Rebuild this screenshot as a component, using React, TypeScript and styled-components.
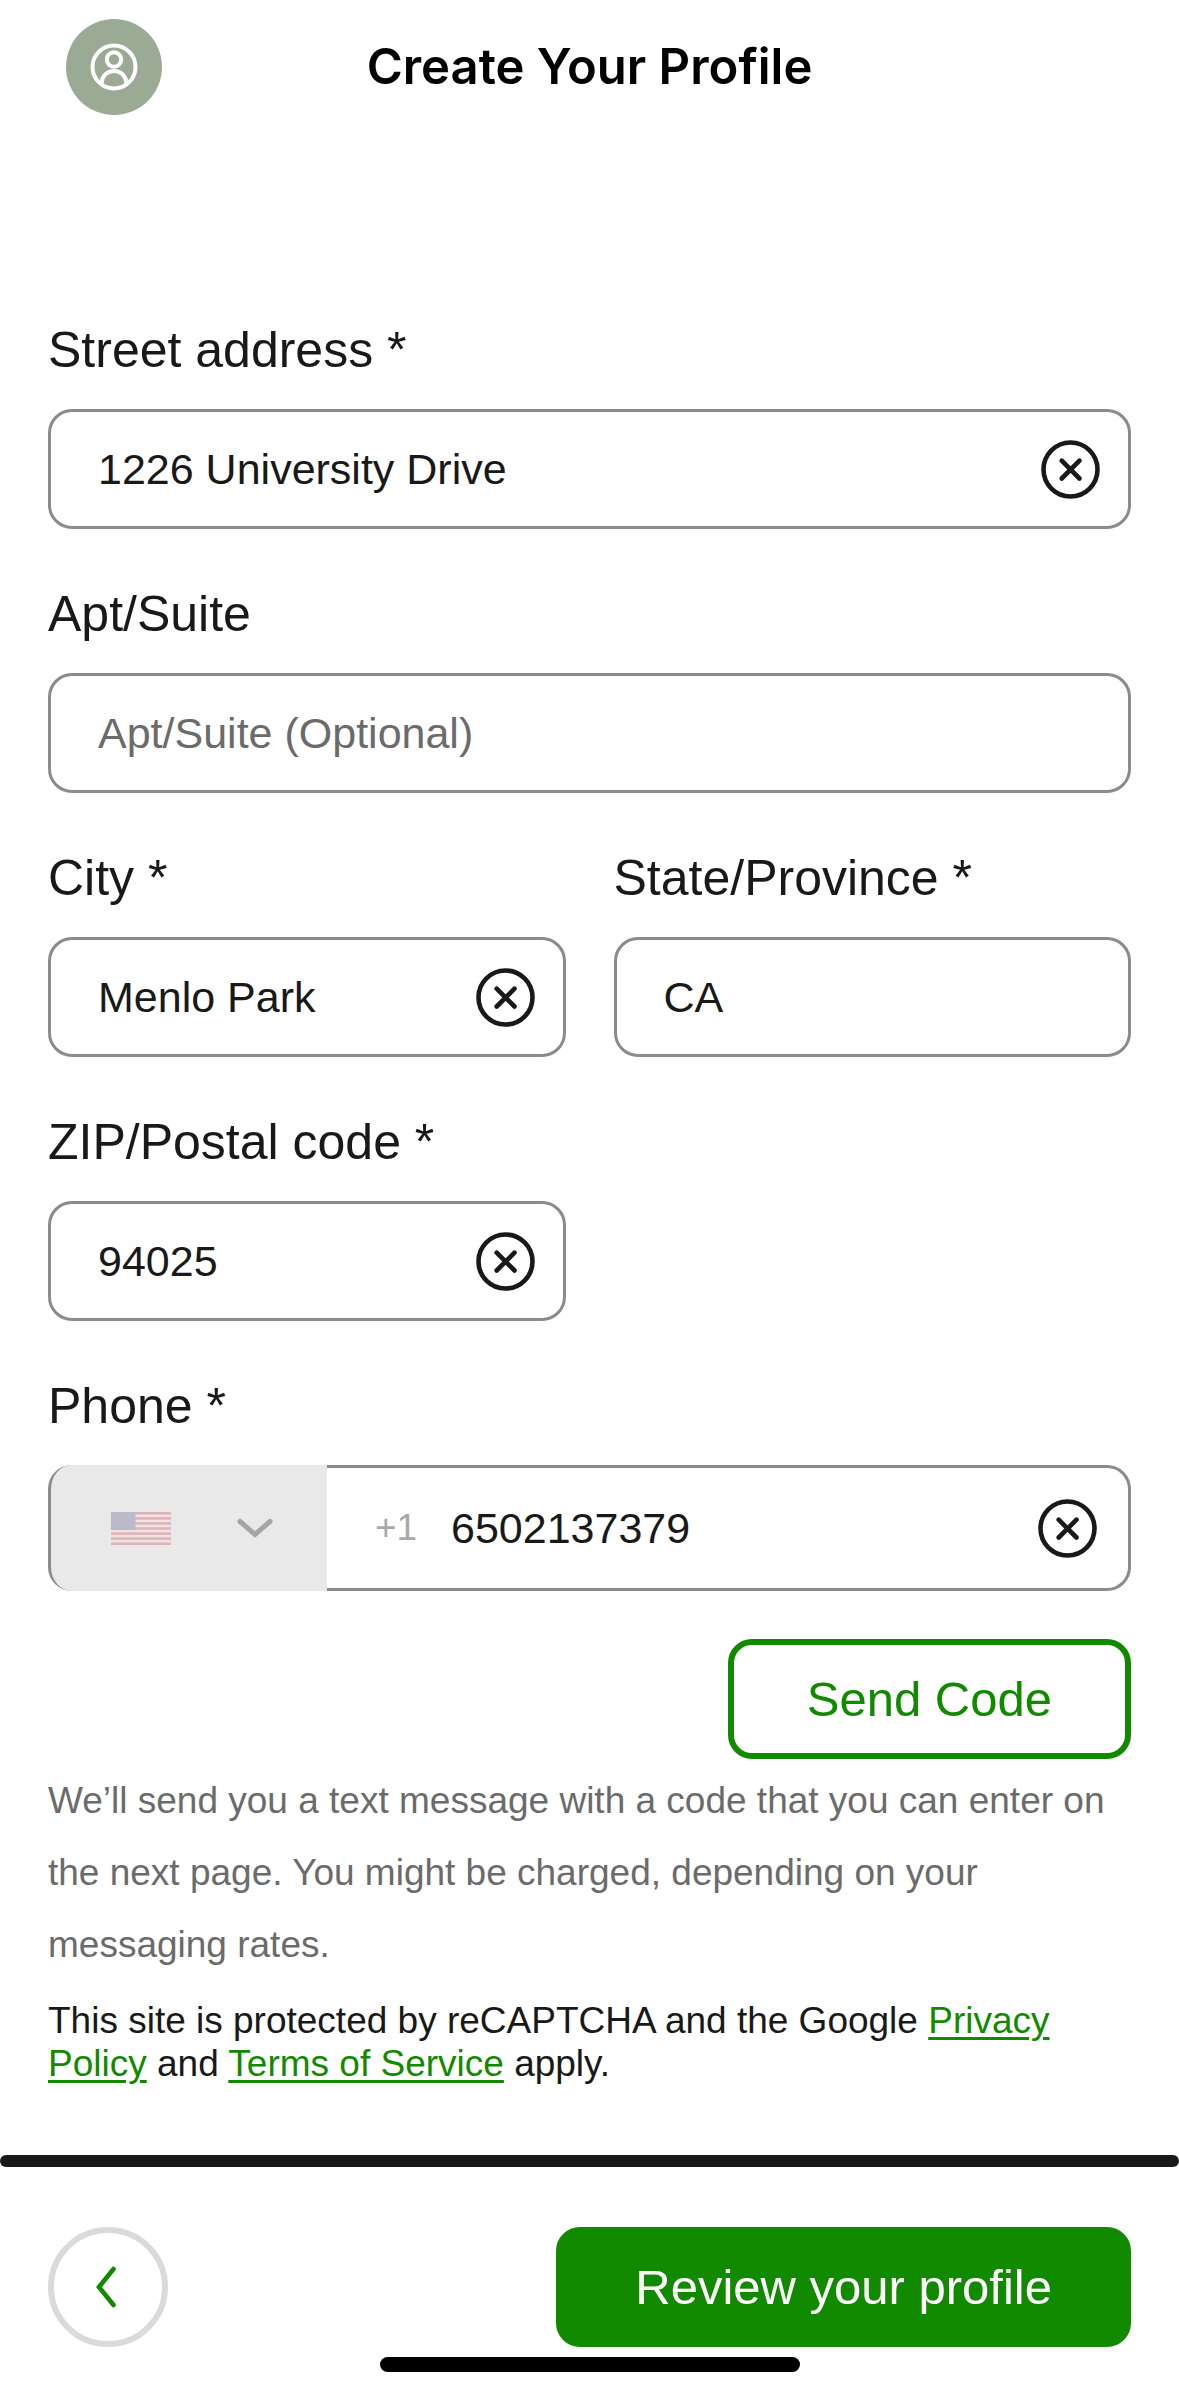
import React, { useState } from "react";
import styled, { createGlobalStyle } from "styled-components";

const color = {
  ink: "#191919",
  green: "#128a00",
  border: "#8b8b8b",
  muted: "#6b6b6b",
  faint: "#a8a8a8",
  panel: "#e9e9e9",
  sage: "#9aaa95",
};

const GlobalStyle = createGlobalStyle`
  *, *::before, *::after { box-sizing: border-box; }
  body {
    margin: 0;
    background: #fff;
    color: ${color.ink};
    font-family: "Liberation Sans", Arial, sans-serif;
  }
  button, input, select { font: inherit; color: inherit; }
`;

const Page = styled.div`
  display: flex;
  flex-direction: column;
`;

const Header = styled.header`
  display: grid;
  grid-template-columns: 1fr auto 1fr;
  align-items: center;
  height: 134px;
  padding: 0 66px;
`;

const Avatar = styled.button`
  display: flex;
  align-items: center;
  justify-content: center;
  width: 96px;
  height: 96px;
  padding: 0;
  border: 0;
  border-radius: 50%;
  background: ${color.sage};
`;

const Title = styled.h1`
  margin: 0;
  font-family: Inter, sans-serif;
  font-size: 49px;
  line-height: 60px;
  font-weight: 600;
  color: #000;
`;

const Form = styled.form`
  padding: 187px 48px 70px;
`;

const Fields = styled.div`
  display: grid;
  grid-template-columns: 1fr 1fr;
  gap: 56px 48px;
`;

const Field = styled.div<{ $wide?: boolean }>`
  display: flex;
  flex-direction: column;
  gap: 30px;
  min-width: 0;
  grid-column: ${(p) => (p.$wide ? "1 / -1" : "auto")};
`;

const RowStart = styled(Field)`
  grid-column: 1;
`;

const Label = styled.label`
  font-size: 50px;
  line-height: 58px;
`;

const Box = styled.div`
  display: flex;
  align-items: center;
  height: 120px;
  padding: 0 28px 0 47px;
  border: 3px solid ${color.border};
  border-radius: 24px;
`;

const TextInput = styled.input`
  flex: 1;
  min-width: 0;
  height: 60px;
  padding: 0;
  border: 0;
  outline: 0;
  background: transparent;
  font-size: 43px;
  &::placeholder {
    color: ${color.muted};
    opacity: 1;
  }
`;

const ClearButton = styled.button`
  display: flex;
  flex: none;
  padding: 0;
  border: 0;
  background: transparent;
`;

const PhoneRow = styled.div`
  display: flex;
  height: 126px;
`;

const CountryPicker = styled.div`
  position: relative;
  display: flex;
  flex: none;
  align-items: center;
  justify-content: space-between;
  width: 279px;
  padding: 0 54px 0 60px;
  border-left: 3px solid ${color.border};
  border-radius: 24px 0 0 24px;
  background: ${color.panel};
`;

const CountrySelect = styled.select`
  position: absolute;
  inset: 0;
  width: 100%;
  opacity: 0;
`;

const NumberBox = styled.div`
  display: flex;
  flex: 1;
  align-items: center;
  min-width: 0;
  padding: 0 31px 0 48px;
  border: 3px solid ${color.border};
  border-left: 0;
  border-radius: 0 24px 24px 0;
`;

const DialCode = styled.span`
  width: 76px;
  font-size: 37px;
  line-height: 60px;
  color: ${color.faint};
`;

const ActionButton = styled.button<{ $filled?: boolean }>`
  height: 120px;
  padding: 0 73px;
  border: 6px solid ${color.green};
  border-radius: 24px;
  background: ${(p) => (p.$filled ? color.green : "transparent")};
  color: ${(p) => (p.$filled ? "#fff" : color.green)};
  font-size: 49px;
  line-height: 58px;
  white-space: nowrap;
`;

const SendRow = styled.div`
  display: flex;
  justify-content: flex-end;
  padding: 48px 0 6px;
`;

const Hint = styled.p`
  margin: 0;
  font-size: 37px;
  line-height: 72px;
  color: ${color.muted};
`;

const Legal = styled.p`
  margin: 18px 0 0;
  font-size: 37px;
  line-height: 43px;
`;

const TextLink = styled.a`
  color: ${color.green};
  text-decoration: underline;
  text-decoration-thickness: 3px;
  text-underline-offset: 4px;
`;

const ProgressBar = styled.div`
  height: 12px;
  border-radius: 6px;
  background: ${color.ink};
`;

const Footer = styled.footer`
  display: flex;
  align-items: center;
  justify-content: space-between;
  padding: 60px 48px 10px;
`;

const BackButton = styled.button`
  display: flex;
  align-items: center;
  justify-content: center;
  width: 120px;
  height: 120px;
  padding: 0;
  border: 6px solid #dadada;
  border-radius: 50%;
  background: transparent;
`;

const HomeIndicator = styled.div`
  align-self: center;
  width: 420px;
  height: 15px;
  margin-bottom: 24px;
  border-radius: 8px;
  background: #000;
`;

const ProfileIcon = () => (
  <svg width="48" height="48" viewBox="0 0 48 48" fill="none" stroke="#fff" strokeWidth="4" aria-hidden="true">
    <circle cx="24" cy="24" r="21.5" />
    <circle cx="24" cy="16.5" r="7.2" />
    <path d="M11.5 40.5C12 33 17 28 24 28S36 33 36.5 40.5" />
  </svg>
);

const ClearIcon = () => (
  <svg width="59" height="59" viewBox="0 0 59 59" fill="none" stroke={color.ink} strokeWidth="4.6" strokeLinecap="round" aria-hidden="true">
    <circle cx="29.5" cy="29.5" r="27" />
    <path d="M20.7 20.7l17.8 17.8M38.5 20.7L20.7 38.5" />
  </svg>
);

const FlagIcon = () => (
  <svg width="60" height="33" viewBox="0 0 60 33" aria-hidden="true">
    <rect width="60" height="33" fill="#efe3e5" />
    {[0, 1, 2, 3, 4, 5, 6].map((n) => (
      <rect key={n} y={(n * 66) / 13} width="60" height={33 / 13} fill="#dfb3b9" />
    ))}
    <rect width="24.5" height="18" fill="#b9b9c9" />
    {[0, 1, 2, 3, 4].map((row) =>
      [0, 1, 2, 3, 4, 5].map((col) => (
        <circle key={`${row}-${col}`} cx={2.2 + col * 4} cy={2 + row * 3.5} r="0.5" fill="#c9c9d5" />
      ))
    )}
  </svg>
);

const DownIcon = () => (
  <svg width="36" height="20" viewBox="0 0 36 20" fill="none" stroke="#a5a5a5" strokeWidth="5" strokeLinecap="round" aria-hidden="true">
    <path d="M3 3.5l15 13 15-13" />
  </svg>
);

const BackIcon = () => (
  <svg width="24" height="42" viewBox="0 0 24 42" fill="none" stroke={color.green} strokeWidth="4.6" strokeLinecap="round" aria-hidden="true">
    <path d="M17.5 3L3 21l14.5 18" />
  </svg>
);

const initial = {
  street: "1226 University Drive",
  apt: "",
  city: "Menlo Park",
  state: "CA",
  zip: "94025",
  phone: "6502137379",
};

type Name = keyof typeof initial;

export default function App() {
  const [values, setValues] = useState(initial);
  const set = (name: Name, value: string) => setValues((v) => ({ ...v, [name]: value }));

  const input = (name: Name, placeholder?: string) => (
    <TextInput
      id={name}
      type={name === "phone" ? "tel" : "text"}
      value={values[name]}
      placeholder={placeholder}
      onChange={(e) => set(name, e.target.value)}
    />
  );

  const clear = (name: Name, what: string) =>
    values[name] !== "" && (
      <ClearButton type="button" aria-label={`Clear ${what}`} onClick={() => set(name, "")}>
        <ClearIcon />
      </ClearButton>
    );

  return (
    <Page>
      <GlobalStyle />
      <Header>
        <Avatar type="button" aria-label="Account">
          <ProfileIcon />
        </Avatar>
        <Title>Create Your Profile</Title>
      </Header>

      <Form id="profile" onSubmit={(e) => e.preventDefault()}>
        <Fields>
          <Field $wide>
            <Label htmlFor="street">Street address *</Label>
            <Box>
              {input("street")}
              {clear("street", "street address")}
            </Box>
          </Field>
          <Field $wide>
            <Label htmlFor="apt">Apt/Suite</Label>
            <Box>{input("apt", "Apt/Suite (Optional)")}</Box>
          </Field>
          <Field>
            <Label htmlFor="city">City *</Label>
            <Box>
              {input("city")}
              {clear("city", "city")}
            </Box>
          </Field>
          <Field>
            <Label htmlFor="state">State/Province *</Label>
            <Box>{input("state")}</Box>
          </Field>
          <RowStart>
            <Label htmlFor="zip">ZIP/Postal code *</Label>
            <Box>
              {input("zip")}
              {clear("zip", "ZIP code")}
            </Box>
          </RowStart>
          <Field $wide>
            <Label htmlFor="phone">Phone *</Label>
            <PhoneRow>
              <CountryPicker>
                <FlagIcon />
                <DownIcon />
                <CountrySelect aria-label="Country" disabled defaultValue="US">
                  <option value="US" aria-label="United States" />
                </CountrySelect>
              </CountryPicker>
              <NumberBox>
                <DialCode>+1</DialCode>
                {input("phone")}
                {clear("phone", "phone")}
              </NumberBox>
            </PhoneRow>
          </Field>
        </Fields>

        <SendRow>
          <ActionButton type="button">Send Code</ActionButton>
        </SendRow>
        <Hint>
          We’ll send you a text message with a code that you can enter on the next page. You might be
          charged, depending on your messaging rates.
        </Hint>
        <Legal>
          This site is protected by reCAPTCHA and the Google <TextLink href="#privacy">Privacy Policy</TextLink> and{" "}
          <TextLink href="#terms">Terms of Service</TextLink> apply.
        </Legal>
      </Form>

      <ProgressBar />
      <Footer>
        <BackButton type="button" aria-label="Back">
          <BackIcon />
        </BackButton>
        <ActionButton $filled type="submit" form="profile">
          Review your profile
        </ActionButton>
      </Footer>
      <HomeIndicator />
    </Page>
  );
}
